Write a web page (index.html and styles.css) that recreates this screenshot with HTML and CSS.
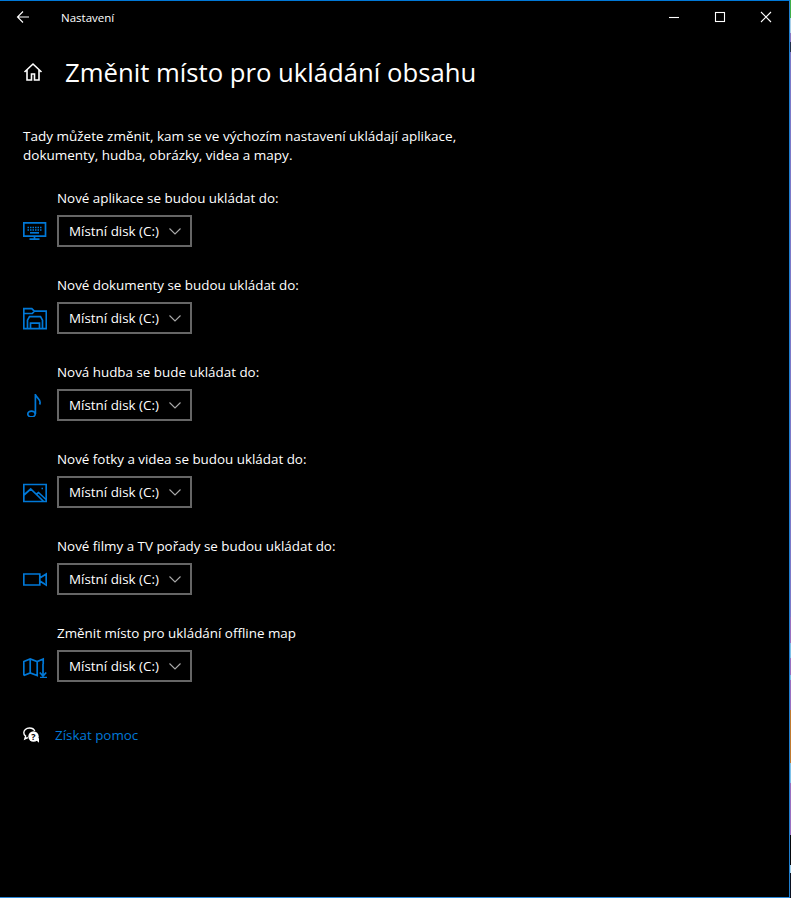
FILE: index.html
```html
<!DOCTYPE html>
<html lang="cs">
<head>
<meta charset="utf-8">
<title>Nastavení</title>
<link rel="stylesheet" href="styles.css">
</head>
<body>
<div class="window">
  <header class="titlebar">
    <svg class="back" width="14" height="14" viewBox="0 0 14 14"><path d="M13 7H1.500M7 1.500 1.500 7 7 12.500"/></svg>
    <span class="apptitle">Nastavení</span>
    <div class="caption">
      <svg width="46" height="32" viewBox="0 0 46 32"><path d="M18 16.500h10"/></svg>
      <svg width="46" height="32" viewBox="0 0 46 32"><rect x="18.500" y="11.500" width="9" height="9"/></svg>
      <svg width="46" height="32" viewBox="0 0 46 32"><path d="M18 11l10 10M28 11 18 21"/></svg>
    </div>
  </header>
  <main class="content">
    <div class="heading">
      <svg class="home" width="20" height="20" viewBox="0 0 20 20"><path d="M1.500 10 10 2l8.500 8M4 8v10h4.500v-6h3v6H16V8"/></svg>
      <h1>Změnit místo pro ukládání obsahu</h1>
    </div>
    <p class="intro">Tady můžete změnit, kam se ve výchozím nastavení ukládají aplikace,<br>dokumenty, hudba, obrázky, videa a mapy.</p>

    <section class="row">
      <label class="label">Nové aplikace se budou ukládat do:</label>
      <div class="control">
        <svg class="icon" width="24" height="24" viewBox="0 0 24 24"><path d="M.800 3.800h21.700v13.400H.800zM6.500 20.200h10M11.500 17.200v3"/><path class="keys" d="M4.500 8.500h14M4.500 11h14"/><path d="M7 13.800h9"/></svg>
        <div class="select"><span>Místní disk (C:)</span><svg class="chev" width="12" height="7" viewBox="0 0 12 7"><path d="M.5.5 6 6 11.500.5"/></svg></div>
      </div>
    </section>
    <section class="row">
      <label class="label">Nové dokumenty se budou ukládat do:</label>
      <div class="control">
        <svg class="icon" width="24" height="24" viewBox="0 0 24 24"><path d="M4 22.700H.800V2.700h8l2.500 2.500h12v17.500H20M.800 7.500h8.500l2-2.300M4.500 22.700v-8.500l2-3.500h11l2 3.500v8.500zM7.500 22.700v-5.500h9v5.500"/></svg>
        <div class="select"><span>Místní disk (C:)</span><svg class="chev" width="12" height="7" viewBox="0 0 12 7"><path d="M.5.5 6 6 11.500.5"/></svg></div>
      </div>
    </section>
    <section class="row">
      <label class="label">Nová hudba se bude ukládat do:</label>
      <div class="control">
        <svg class="icon" width="24" height="24" viewBox="0 0 24 24"><ellipse cx="8.500" cy="21" rx="3.700" ry="2.900"/><path d="M12.400 21V1c.4 3.500 4.700 4.500 4.700 8.500 0 .8-.2 1.500-.5 2"/></svg>
        <div class="select"><span>Místní disk (C:)</span><svg class="chev" width="12" height="7" viewBox="0 0 12 7"><path d="M.5.5 6 6 11.500.5"/></svg></div>
      </div>
    </section>
    <section class="row">
      <label class="label">Nové fotky a videa se budou ukládat do:</label>
      <div class="control">
        <svg class="icon" width="24" height="24" viewBox="0 0 24 24"><path d="M.800 4.500h22.400v17H.800zM1 15l6.700-6 13 12.500M13 14.500l2.500-2 7.500 7M18.500 8.500h1.500"/></svg>
        <div class="select"><span>Místní disk (C:)</span><svg class="chev" width="12" height="7" viewBox="0 0 12 7"><path d="M.5.5 6 6 11.500.5"/></svg></div>
      </div>
    </section>
    <section class="row">
      <label class="label">Nové filmy a TV pořady se budou ukládat do:</label>
      <div class="control">
        <svg class="icon" width="24" height="24" viewBox="0 0 24 24"><path d="M.800 7h16v11H.800zM16.800 11l6.400-4v11l-6.400-4"/></svg>
        <div class="select"><span>Místní disk (C:)</span><svg class="chev" width="12" height="7" viewBox="0 0 12 7"><path d="M.5.5 6 6 11.500.5"/></svg></div>
      </div>
    </section>
    <section class="row">
      <label class="label">Změnit místo pro ukládání offline map</label>
      <div class="control">
        <svg class="icon" width="24" height="24" viewBox="0 0 24 24"><path d="M.800 21.500V7.500l6.400-2.500 7 2.500 6-2.500v5M7.200 5v14M14.200 7.500v14l-7-2.500-6.400 2.500M20 10v12M16.800 18.500l3.200 3.500 3.200-3.500M17 23.500h7"/></svg>
        <div class="select"><span>Místní disk (C:)</span><svg class="chev" width="12" height="7" viewBox="0 0 12 7"><path d="M.5.5 6 6 11.500.5"/></svg></div>
      </div>
    </section>

    <div class="help">
      <svg class="helpicon" width="17" height="16" viewBox="0 0 17 16"><path class="bubble" d="M6.500 1C3 1 .8 3.200.8 5.700c0 1.400.7 2.600 1.800 3.400L1.800 12l3-1.500M6.500 1c2.500 0 4.500 1.200 5.300 3"/><circle class="dot" cx="10.500" cy="9.500" r="5.200"/><path class="dot" d="m13 13 3 2.800v-5z"/><text x="10.500" y="12.800" text-anchor="middle" class="qmark">?</text></svg>
      <a class="helplink" href="#">Získat pomoc</a>
    </div>
  </main>
</div>
<div class="edge"></div>
</body>
</html>
```
FILE: styles.css
```css
* { box-sizing: border-box; }
html, body { margin: 0; height: 100%; background: #000; }
body { display: flex; font-family: "Open Sans", "Liberation Sans", sans-serif; color: #fff; overflow: hidden; }
.window {
  flex: none;
  height: 898px;
  width: 790px;
  border-top: 1px solid #0078d7;
  border-bottom: 1px solid #2b88d8;
  border-right: 1px solid #1f7fd0;
  background: #000;
}
.edge {
  flex: 1;
  background: linear-gradient(to bottom,
    #3fae4a 0 18px, #a9cfe8 18px 33px, #8a78c4 33px 42px, #20304c 42px 52px,
    #7c7ac8 52px 617px, #9a70c0 617px 643px, #7fc0e8 643px 658px, #9a70c0 658px 675px,
    #7fc0e8 675px 680px, #9a70c0 680px 710px, #c07a30 710px 763px, #7fc0e8 763px 783px,
    #9a70c0 783px 835px, #05070c 835px 865px, #a9d4ee 865px 873px, #0a1020 873px 898px);
}
.titlebar { display: flex; align-items: center; height: 32px; }
.titlebar svg { fill: none; stroke: #fff; stroke-width: 1.1; }
.back { margin-left: 16px; }
.apptitle { margin-left: 31px; font-size: 11.5px; }
.caption { margin-left: auto; display: flex; }
.caption svg { display: block; }
.content { padding: 0 0 0 23px; }
.heading { display: flex; align-items: center; gap: 22px; margin-top: 21px; height: 36px; }
.home { flex: none; fill: none; stroke: #fff; stroke-width: 1.6; }
h1 { margin: 0; font-size: 25.7px; font-weight: 400; }
.intro { margin: 37px 0 0; font-size: 13.5px; line-height: 19px; }
.row { margin-top: 23px; }
.row + .row { margin-top: 28px; }
.label { display: block; margin-left: 34px; font-size: 13.4px; line-height: 20px; }
.control { display: flex; align-items: center; gap: 10px; margin-top: 7px; }
.icon { flex: none; fill: none; stroke: #0078d7; stroke-width: 1.7; }
.keys { stroke-width: 1.5; stroke-dasharray: 1.5 1; }
.select {
  display: flex; align-items: center; justify-content: space-between;
  width: 135px; height: 32px; padding: 0 9px 0 10px;
  border: 2px solid #666;
  font-size: 13.4px;
}
.chev { fill: none; stroke: #aaa; stroke-width: 1.1; }
.help { display: flex; align-items: center; gap: 15px; margin-top: 44px; }
.helpicon { flex: none; }
.bubble { fill: none; stroke: #fff; stroke-width: 1.4; }
.dot { fill: #fff; }
.helplink { color: #0078d7; font-size: 13.4px; text-decoration: none; }
.qmark { font-size: 9px; font-weight: 700; fill: #000; }
```
